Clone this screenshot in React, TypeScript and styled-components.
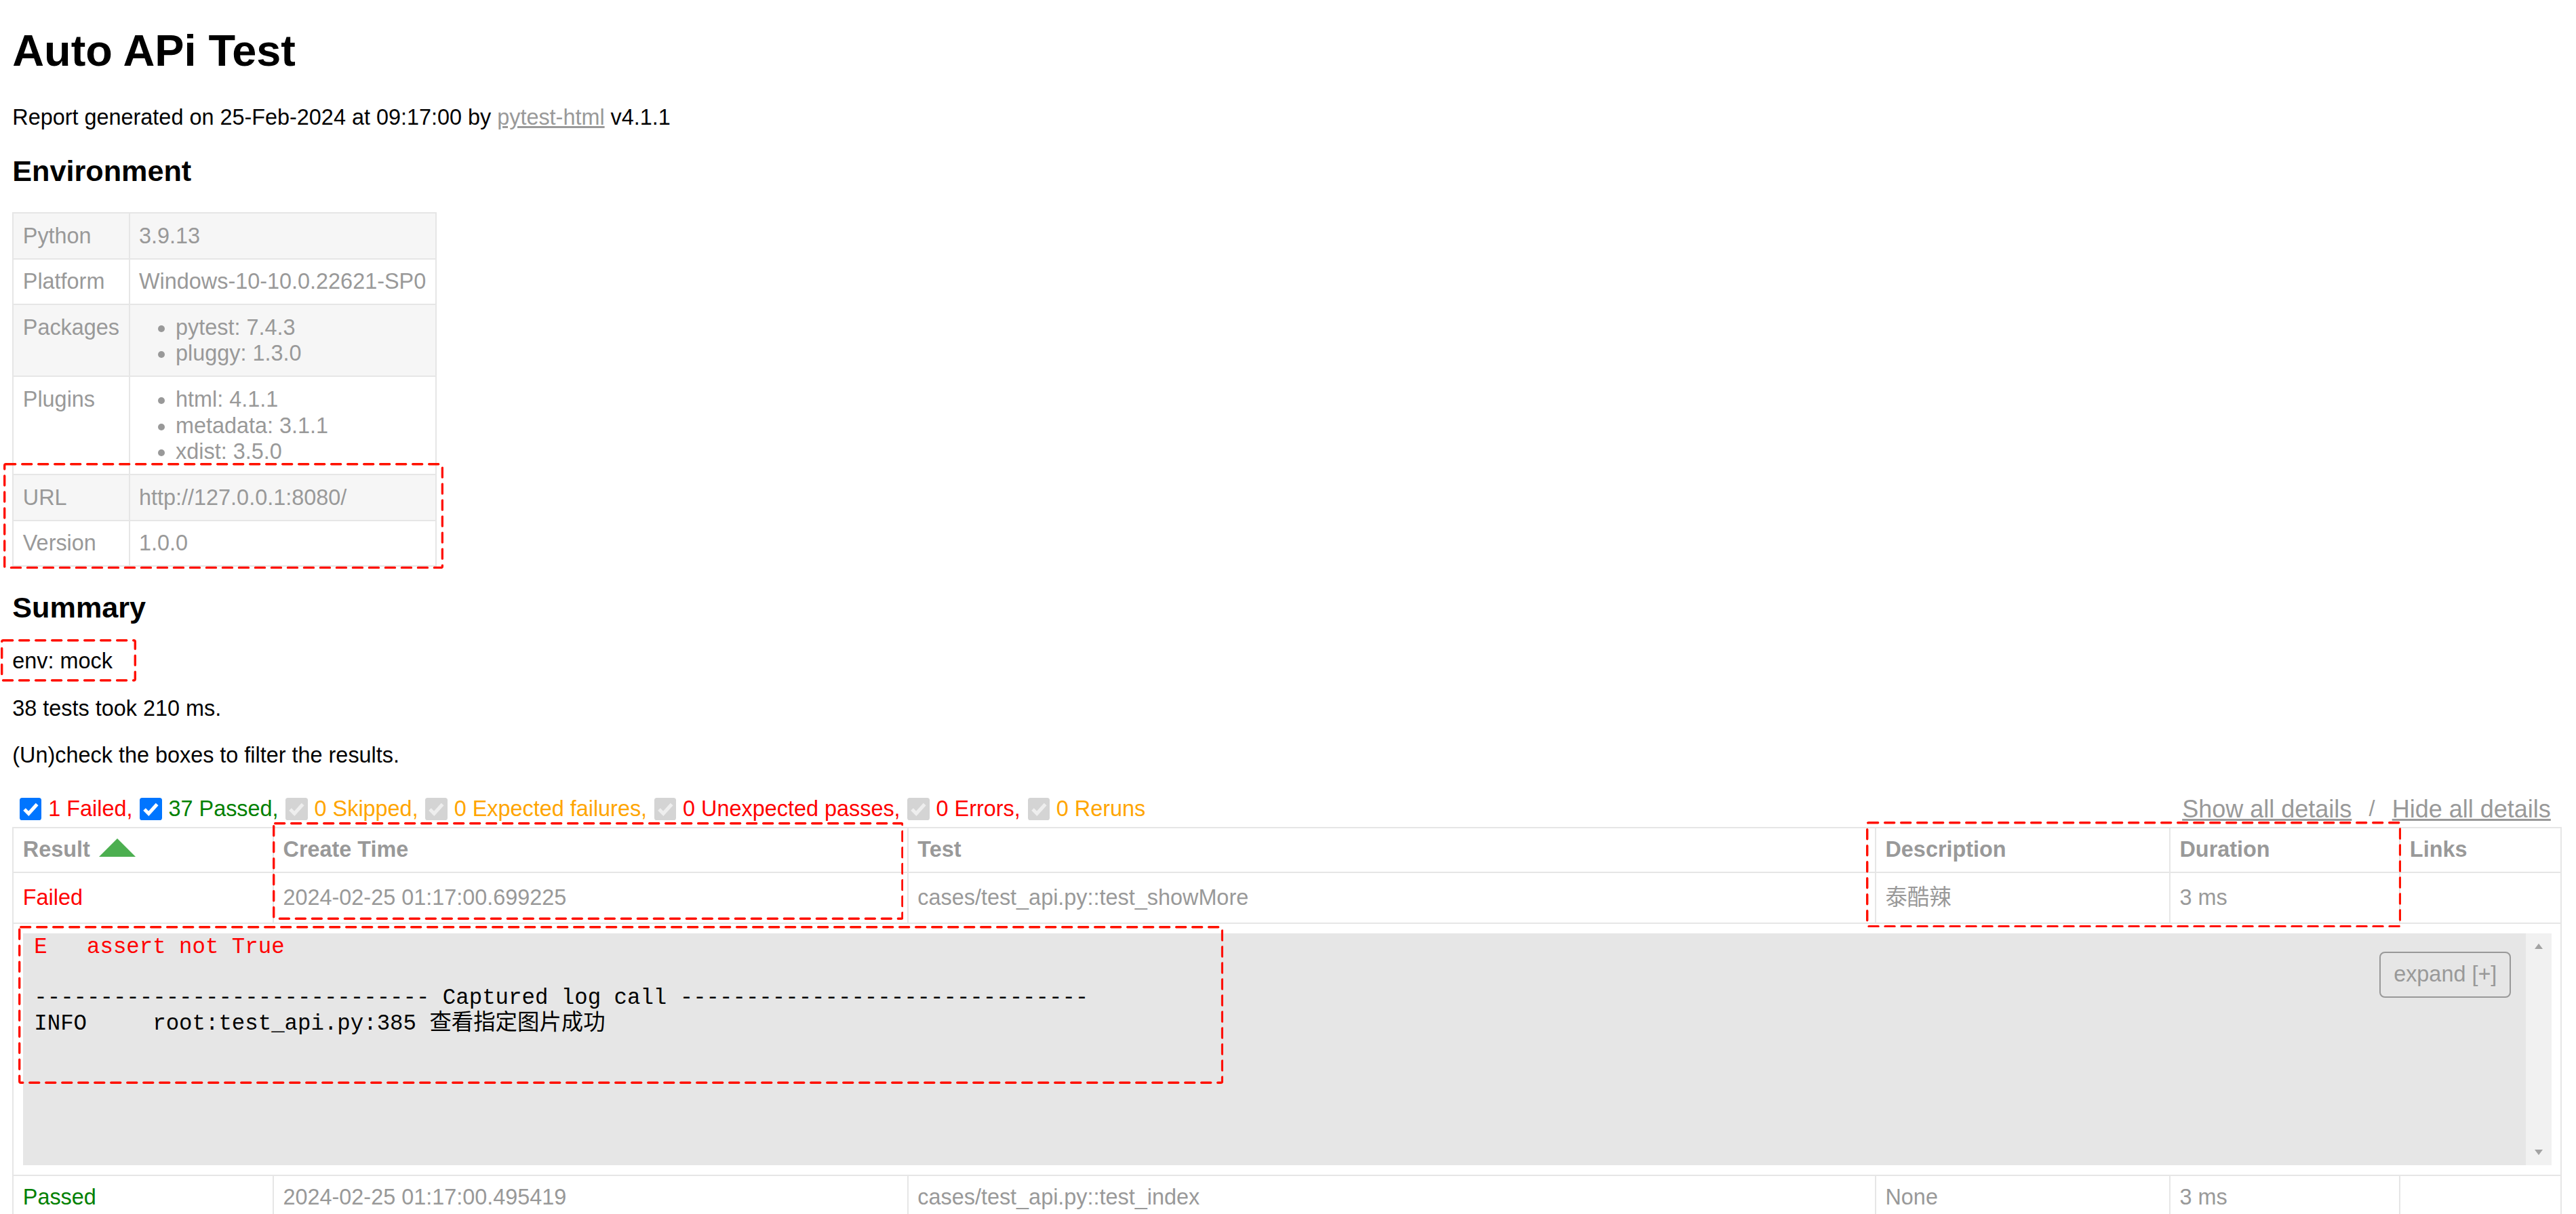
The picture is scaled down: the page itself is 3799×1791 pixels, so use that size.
import React from "react";
import styled, { createGlobalStyle } from "styled-components";

const S = 2.7;
const px = (n: number) => `${+(n * S).toFixed(3)}px`;

const RED = "#ff0000";
const GREEN = "#008000";
const ORANGE = "#ffa500";
const GREY = "#999999";
const LINE = "#e6e6e6";

const GlobalStyle = createGlobalStyle`
  html, body {
    margin: 0;
    padding: 0;
    background: #ffffff;
    overflow: hidden;
  }
  body {
    font-family: "Liberation Sans", Arial, Helvetica, "Noto Sans CJK SC", sans-serif;
    font-size: ${px(12)};
    color: ${GREY};
  }
`;

const Page = styled.div`
  position: relative;
  display: flow-root;
  padding: 37px 21px 0 18.3px;
`;

const Title = styled.h1`
  margin: 0 0 ${px(16.08)};
  font-size: ${px(24)};
  font-weight: bold;
  color: #000;
  line-height: normal;
`;

const Paragraph = styled.p`
  margin: ${px(12)} 0;
  color: #000;
  line-height: normal;
`;

const Link = styled.a`
  color: ${GREY};
  text-decoration: underline;
`;

const SectionTitle = styled.h2`
  margin: ${px(13.28)} 0;
  font-size: ${px(16)};
  font-weight: bold;
  color: #000;
  line-height: normal;
`;

const EnvTable = styled.table`
  border-collapse: collapse;
`;

const EnvRow = styled.tr`
  &:nth-child(odd) {
    background-color: #f6f6f6;
  }
`;

const EnvCell = styled.td`
  padding: ${px(5)};
  border: ${px(1)} solid ${LINE};
  vertical-align: top;
  line-height: 38.6px;
`;

const EnvList = styled.ul`
  margin: 0;
  padding: 0 ${px(20)};
  list-style: disc;
`;

const Summary = styled.section`
  display: flow-root;
`;

const Controls = styled.div`
  display: flex;
  justify-content: space-between;
  align-items: center;
  box-sizing: border-box;
  height: 54.4px;
  padding-top: 2.2px;
`;

const Filters = styled.div`
  display: flex;
  align-items: center;
`;

const FilterBox = styled.span<{ $on: boolean }>`
  display: flex;
  flex-shrink: 0;
  width: 32.4px;
  height: 32.4px;
  margin: 0 9.8px 0 10.8px;
  border-radius: 3.6px;
  background: ${(p) => (p.$on ? "#0075ff" : "#d4d4d4")};

  svg {
    display: block;
    width: 100%;
    height: 100%;
  }
`;

const FilterLabel = styled.span<{ $tone: string }>`
  color: ${(p) => p.$tone};
  white-space: pre;
  line-height: normal;
`;

const Collapse = styled.div`
  display: flex;
  align-items: center;
`;

const CollapseButton = styled.button`
  font-family: "Liberation Sans", Arial, sans-serif;
  font-size: 36px;
  line-height: normal;
  color: ${GREY};
  background: none;
  border: none;
  padding: 2.7px 16.2px;
  margin: 0;
  text-decoration: underline;
  cursor: pointer;
`;

const Slash = styled.span`
  color: ${GREY};
  white-space: pre;
`;

const ResultsTable = styled.table`
  width: 100%;
  table-layout: fixed;
  border-collapse: collapse;
  border: ${px(1)} solid ${LINE};
  color: ${GREY};
  font-size: ${px(12)};
`;

const HeadCell = styled.th`
  padding: ${px(5)};
  border: ${px(1)} solid ${LINE};
  text-align: left;
  font-weight: bold;
  line-height: normal;
  white-space: nowrap;
`;

const SortArrow = styled.span`
  display: inline-block;
  width: 0;
  height: 0;
  margin-left: 12.8px;
  border-left: 27px solid transparent;
  border-right: 27px solid transparent;
  border-bottom: 27px solid #4caf50;
  vertical-align: baseline;
`;

const Row = styled.tr<{ $lh?: number }>`
  line-height: ${(p) => (p.$lh ? `${p.$lh}px` : "37.9px")};
`;

const Cell = styled.td<{ $tone?: string }>`
  padding: ${px(5)};
  border: ${px(1)} solid ${LINE};
  text-align: left;
  color: ${(p) => p.$tone || GREY};
  white-space: nowrap;
  overflow: hidden;
`;

const ExtraCell = styled.td`
  padding: ${px(5)};
  border: ${px(1)} solid ${LINE};
`;

const LogWrapper = styled.div`
  display: flex;
  height: 342.7px;
  background-color: ${LINE};
`;

const LogArea = styled.div`
  position: relative;
  flex: 1;
  min-width: 0;
`;

const LogText = styled.pre`
  margin: 0;
  padding: 2.6px 0 0 16.5px;
  font-family: "Liberation Mono", "Courier New", "Noto Sans CJK SC", monospace;
  font-size: ${px(12)};
  line-height: 37.6px;
  color: #000;
  white-space: pre-wrap;
`;

const ErrorLine = styled.span`
  color: ${RED};
`;

const Expander = styled.div`
  position: absolute;
  top: 27px;
  left: calc(100% - 216px);
  width: max-content;
  padding: ${px(5)} ${px(7)};
  border: ${px(1)} solid ${GREY};
  border-radius: ${px(3)};
  background-color: ${LINE};
  color: ${GREY};
  line-height: normal;
  cursor: pointer;
`;

const Scrollbar = styled.div`
  display: flex;
  flex-direction: column;
  justify-content: space-between;
  align-items: center;
  flex-shrink: 0;
  width: 37.3px;
  box-sizing: border-box;
  padding: 15px 0;
  background: #f1f1f1;
`;

const ScrollArrow = styled.span<{ $dir: "up" | "down" }>`
  display: block;
  width: 0;
  height: 0;
  border-left: 6.5px solid transparent;
  border-right: 6.5px solid transparent;
  ${(p) =>
    p.$dir === "up"
      ? "border-bottom: 8px solid #a3a3a3;"
      : "border-top: 8px solid #a3a3a3;"}
`;

const AnnotationFrame = styled.div<{ $l: number; $t: number; $w: number; $h: number }>`
  position: absolute;
  left: ${(p) => p.$l}px;
  top: ${(p) => p.$t}px;
  width: ${(p) => p.$w}px;
  height: ${(p) => p.$h}px;
  pointer-events: none;

  svg {
    display: block;
  }
`;

type Box = { l: number; t: number; r: number; b: number };

const Annotation = ({ box }: { box: Box }) => {
  const w = box.r - box.l;
  const h = box.b - box.t;
  const sw = 3.4;
  return (
    <AnnotationFrame $l={box.l} $t={box.t} $w={w} $h={h}>
      <svg width={w} height={h} viewBox={`0 0 ${w} ${h}`}>
        <rect
          x={sw / 2}
          y={sw / 2}
          width={w - sw}
          height={h - sw}
          rx={2}
          fill="none"
          stroke="#ff1000"
          strokeWidth={sw}
          strokeDasharray="14 10"
          strokeLinecap="round"
        />
      </svg>
    </AnnotationFrame>
  );
};

const FilterCheck = ({ on }: { on: boolean }) => (
  <FilterBox $on={on}>
    <svg viewBox="0 0 12 12">
      <path
        d="M2.6 6.3 L4.9 8.6 L9.5 3.5"
        fill="none"
        stroke={on ? "#ffffff" : "#eeeeee"}
        strokeWidth="1.9"
      />
    </svg>
  </FilterBox>
);

const environment: { key: string; value: string | string[] }[] = [
  { key: "Python", value: "3.9.13" },
  { key: "Platform", value: "Windows-10-10.0.22621-SP0" },
  { key: "Packages", value: ["pytest: 7.4.3", "pluggy: 1.3.0"] },
  { key: "Plugins", value: ["html: 4.1.1", "metadata: 3.1.1", "xdist: 3.5.0"] },
  { key: "URL", value: "http://127.0.0.1:8080/" },
  { key: "Version", value: "1.0.0" },
];

const filters = [
  { on: true, label: "1 Failed,", tone: RED },
  { on: true, label: "37 Passed,", tone: GREEN },
  { on: false, label: "0 Skipped,", tone: ORANGE },
  { on: false, label: "0 Expected failures,", tone: ORANGE },
  { on: false, label: "0 Unexpected passes,", tone: RED },
  { on: false, label: "0 Errors,", tone: RED },
  { on: false, label: "0 Reruns", tone: ORANGE },
];

const COLS = [383.7, 935.8, 1427.2, 434, 339.4, 237.7];

const passedRows = [
  ["2024-02-25 01:17:00.495419", "cases/test_api.py::test_index", "None", "3 ms"],
  ["2024-02-25 01:17:00.512630", "cases/test_api.py::test_login", "None", "4 ms"],
  ["2024-02-25 01:17:00.528117", "cases/test_api.py::test_logout", "None", "2 ms"],
];

const annotations: Box[] = [
  { l: 5.4, t: 682.5, r: 654.5, b: 838.6 },
  { l: 1.3, t: 943.3, r: 201.3, b: 1005.7 },
  { l: 401.7, t: 1212.7, r: 1332.3, b: 1356.7 },
  { l: 26.7, t: 1366, r: 1804, b: 1599 },
  { l: 2751.7, t: 1211.7, r: 3541, b: 1368 },
];

const logDivider =
  "-".repeat(30) + " Captured log call " + "-".repeat(31);

export default function App() {
  return (
    <>
      <GlobalStyle />
      <Page>
        <Title>Auto APi Test</Title>
        <Paragraph>
          Report generated on 25-Feb-2024 at 09:17:00 by{" "}
          <Link href="#">pytest-html</Link> v4.1.1
        </Paragraph>

        <SectionTitle>Environment</SectionTitle>
        <EnvTable>
          <tbody>
            {environment.map((e) => (
              <EnvRow key={e.key}>
                <EnvCell>{e.key}</EnvCell>
                <EnvCell>
                  {Array.isArray(e.value) ? (
                    <EnvList>
                      {e.value.map((v) => (
                        <li key={v}>{v}</li>
                      ))}
                    </EnvList>
                  ) : (
                    e.value
                  )}
                </EnvCell>
              </EnvRow>
            ))}
          </tbody>
        </EnvTable>

        <Summary>
          <SectionTitle>Summary</SectionTitle>
          <div>
            <Paragraph>env: mock</Paragraph>
          </div>
          <Paragraph>38 tests took 210 ms.</Paragraph>
          <Paragraph>(Un)check the boxes to filter the results.</Paragraph>
          <Controls>
            <Filters>
              {filters.map((f) => (
                <React.Fragment key={f.label}>
                  <FilterCheck on={f.on} />
                  <FilterLabel $tone={f.tone}>{f.label}</FilterLabel>
                </React.Fragment>
              ))}
            </Filters>
            <Collapse>
              <CollapseButton>Show all details</CollapseButton>
              <Slash>{"\u00a0/\u00a0"}</Slash>
              <CollapseButton>Hide all details</CollapseButton>
            </Collapse>
          </Controls>
        </Summary>

        <ResultsTable>
          <colgroup>
            {COLS.map((w, i) => (
              <col key={i} style={{ width: `${w}px` }} />
            ))}
          </colgroup>
          <thead>
            <tr>
              <HeadCell>
                Result
                <SortArrow />
              </HeadCell>
              <HeadCell>Create Time</HeadCell>
              <HeadCell>Test</HeadCell>
              <HeadCell>Description</HeadCell>
              <HeadCell>Duration</HeadCell>
              <HeadCell>Links</HeadCell>
            </tr>
          </thead>
          <tbody>
            <Row $lh={46.5}>
              <Cell $tone={RED}>Failed</Cell>
              <Cell>2024-02-25 01:17:00.699225</Cell>
              <Cell>cases/test_api.py::test_showMore</Cell>
              <Cell>泰酷辣</Cell>
              <Cell>3 ms</Cell>
              <Cell />
            </Row>
            <tr>
              <ExtraCell colSpan={6}>
                <LogWrapper>
                  <LogArea>
                    <Expander>expand [+]</Expander>
                    <LogText>
                      <ErrorLine>E   assert not True</ErrorLine>
                      {"\n\n"}
                      {logDivider}
                      {"\n"}
                      {"INFO     root:test_api.py:385 查看指定图片成功"}
                      {"\n"}
                    </LogText>
                  </LogArea>
                  <Scrollbar>
                    <ScrollArrow $dir="up" />
                    <ScrollArrow $dir="down" />
                  </Scrollbar>
                </LogWrapper>
              </ExtraCell>
            </tr>
            {passedRows.map((r) => (
              <Row key={r[0]}>
                <Cell $tone={GREEN}>Passed</Cell>
                <Cell>{r[0]}</Cell>
                <Cell>{r[1]}</Cell>
                <Cell>{r[2]}</Cell>
                <Cell>{r[3]}</Cell>
                <Cell />
              </Row>
            ))}
          </tbody>
        </ResultsTable>

        {annotations.map((b, i) => (
          <Annotation key={i} box={b} />
        ))}
      </Page>
    </>
  );
}
